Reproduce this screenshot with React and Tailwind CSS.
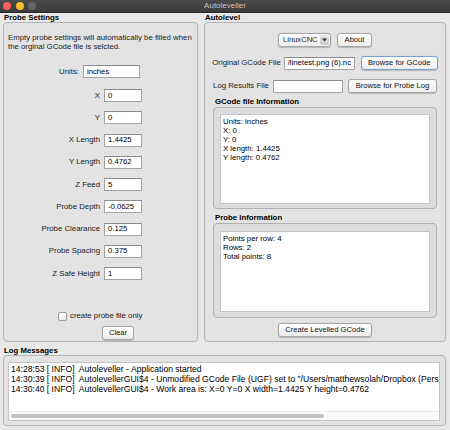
import React from 'react';

const Input = ({ value = '', className = '' }) => (
  <div
    className={`h-[13px] bg-white border border-[#a3a3a3] border-t-[#8c8c8c] pl-[3px] flex items-center overflow-hidden whitespace-nowrap text-[7.7px] text-black ${className}`}
  >
    {value}
  </div>
);

const Button = ({ children, className = '', focused = false }) => (
  <div
    className={`h-[14px] rounded-[3px] border ${
      focused ? 'border-[#7b9ed0]' : 'border-[#a6a6a6]'
    } bg-gradient-to-b from-white to-[#ececec] shadow-[0_0.5px_1px_rgba(0,0,0,0.2)] flex items-center justify-center whitespace-nowrap text-[7.6px] text-[#111] ${className}`}
  >
    {children}
  </div>
);

const Field = ({ label, value }) => (
  <div className="flex h-[13px] items-center">
    <span className="w-[96px] text-right">{label}</span>
    <Input value={value} className="ml-[4px] w-[38px]" />
  </div>
);

const fields = [
  ['X', '0'],
  ['Y', '0'],
  ['X Length', '1.4425'],
  ['Y Length', '0.4762'],
  ['Z Feed', '5'],
  ['Probe Depth', '-0.0625'],
  ['Probe Clearance', '0.125'],
  ['Probe Spacing', '0.375'],
  ['Z Safe Height', '1'],
];

const SectionLabel = ({ children, className = '' }) => (
  <div className={`font-bold text-[7.8px] leading-[9px] text-black ${className}`}>{children}</div>
);

export default function App() {
  return (
    <div className="w-[450px] h-[430px] bg-[#e8e8e8] flex flex-col overflow-hidden font-['Liberation_Sans',Arial,sans-serif] text-[7.8px] text-[#1a1a1a]">
      {/* title bar */}
      <div className="relative h-[13px] shrink-0 bg-gradient-to-b from-[#4a4a4a] to-[#3b3b3b] border-b border-[#2a2a2a] flex items-center justify-center">
        <div className="absolute left-[3px] top-[2px] flex gap-[4.5px]">
          <span className="w-[8px] h-[8px] rounded-full bg-[#fc5f57]" />
          <span className="w-[8px] h-[8px] rounded-full bg-[#fdbc2e]" />
          <span className="w-[8px] h-[8px] rounded-full bg-[#676767]" />
        </div>
        <span className="text-[8px] text-[#c4c4c4]">Autoleveller</span>
      </div>

      {/* main columns */}
      <div className="flex h-[329px] shrink-0 pl-[3px] pr-[4px] gap-[6px]">
        {/* left */}
        <div className="w-[195px] flex flex-col">
          <SectionLabel className="pl-[1px] h-[9px]">Probe Settings</SectionLabel>
          <div className="flex-1 rounded-[4px] border border-[#b4b4b4] bg-[#e3e3e3] flex flex-col pt-[10px]">
            <div className="pl-[4px] leading-[9px] whitespace-nowrap">
              Empty probe settings will automatically be filled when
              <br />
              the orginal GCode file is selcted.
            </div>
            <div className="flex h-[13px] items-center mt-[14px]">
              <span className="w-[75px] text-right">Units:</span>
              <Input value="inches" className="ml-[4px] w-[57px]" />
            </div>
            <div className="flex flex-col gap-[9.25px] mt-[11px]">
              {fields.map(([l, v]) => (
                <Field key={l} label={l} value={v} />
              ))}
            </div>
            <div className="flex items-center mt-[31px] pl-[54px] h-[10px]">
              <span className="w-[9px] h-[9px] rounded-[2px] border border-[#9a9a9a] bg-gradient-to-b from-white to-[#eeeeee]" />
              <span className="ml-[3px]">create probe file only</span>
            </div>
            <div className="flex mt-[5px] pl-[98px]">
              <Button className="w-[32px]">Clear</Button>
            </div>
          </div>
        </div>

        {/* right */}
        <div className="w-[242px] flex flex-col">
          <SectionLabel className="pl-[1px] h-[9px]">Autolevel</SectionLabel>
          <div className="flex-1 rounded-[4px] border border-[#b4b4b4] bg-[#e3e3e3] flex flex-col pt-[10px]">
            <div className="flex justify-center gap-[6px] h-[14px]">
              <div className="w-[53px] h-[14px] rounded-[3px] border border-[#a6a6a6] bg-gradient-to-b from-white to-[#ededed] flex items-center shadow-[0_0.5px_1px_rgba(0,0,0,0.2)]">
                <span className="flex-1 pl-[4px] text-[7.6px]">LinuxCNC</span>
                <span className="w-[9px] h-[10px] mr-[1px] rounded-[2px] bg-gradient-to-b from-[#e6e6e6] to-[#c8c8c8] flex items-center justify-center">
                  <svg width="5" height="4" viewBox="0 0 5 4">
                    <path d="M0 0.5 L5 0.5 L2.5 3.5 Z" fill="#333" />
                  </svg>
                </span>
              </div>
              <Button className="w-[35px]">About</Button>
            </div>
            <div className="flex justify-center items-center mt-[9px] h-[14px]">
              <span>Original GCode File</span>
              <Input value="/linetest.png (6).nc" className="ml-[3px] w-[71px]" />
              <Button focused className="ml-[6px] w-[77px]">Browse for GCode</Button>
            </div>
            <div className="flex justify-center items-center mt-[9px] h-[14px]">
              <span>Log Results File</span>
              <Input className="ml-[4px] w-[70px]" />
              <Button className="ml-[5px] w-[89px]">Browse for Probe Log</Button>
            </div>
            <SectionLabel className="ml-[10px] mt-[3px] h-[11px] pt-[1px]">GCode file Information</SectionLabel>
            <div className="mx-[8px] h-[102px] rounded-[4px] border border-[#b0b0b0] bg-[#dcdcdc] px-[6px] pt-[6px] pb-[4px] flex">
              <div className="flex-1 bg-white border border-[#c4c4c4] pl-[2px] pt-[2px] leading-[9px] text-black">
                Units: inches
                <br />
                X: 0
                <br />
                Y: 0
                <br />
                X length: 1.4425
                <br />
                Y length: 0.4762
              </div>
            </div>
            <SectionLabel className="ml-[10px] h-[14px] pt-[4px]">Probe Information</SectionLabel>
            <div className="mx-[8px] h-[95px] rounded-[4px] border border-[#b0b0b0] bg-[#dcdcdc] px-[6px] pt-[7px] pb-[5px] flex">
              <div className="flex-1 bg-white border border-[#c4c4c4] pl-[2px] pt-[2px] leading-[9px] text-black">
                Points per row: 4
                <br />
                Rows: 2
                <br />
                Total points: 8
              </div>
            </div>
            <div className="flex justify-center mt-[5px]">
              <Button className="w-[94px]">Create Levelled GCode</Button>
            </div>
          </div>
        </div>
      </div>

      {/* log */}
      <div className="flex flex-col pl-[3px] pr-[4px] flex-1 pb-[4px]">
        <SectionLabel className="pl-[1px] h-[13px] pt-[4px]">Log Messages</SectionLabel>
        <div className="flex-1 rounded-[4px] border border-[#b4b4b4] bg-[#e3e3e3] pl-[4px] pr-[5px] pt-[6px] pb-[4px] flex">
          <div className="flex-1 min-w-0 bg-white border border-[#c4c4c4] flex flex-col overflow-hidden">
            <div className="flex-1 pl-[2px] pt-[1px] leading-[10px] whitespace-nowrap text-[8.6px] text-black overflow-hidden">
              <div>14:28:53 [ INFO]&nbsp; Autoleveller - Application started</div>
              <div>
                14:30:39 [ INFO]&nbsp; AutolevellerGUI$4 - Unmodified GCode File (UGF) set to "/Users/matthewsolah/Dropbox (Person
              </div>
              <div>14:30:40 [ INFO]&nbsp; AutolevellerGUI$4 - Work area is: X=0 Y=0 X width=1.4425 Y height=0.4762</div>
            </div>
            <div className="h-[9px] shrink-0 bg-[#fafafa] border-t border-[#ececec] flex items-center px-[2px]">
              <div className="w-[313px] h-[4px] rounded-full bg-[#c1c1c1]" />
            </div>
          </div>
        </div>
      </div>
    </div>
  );
}
